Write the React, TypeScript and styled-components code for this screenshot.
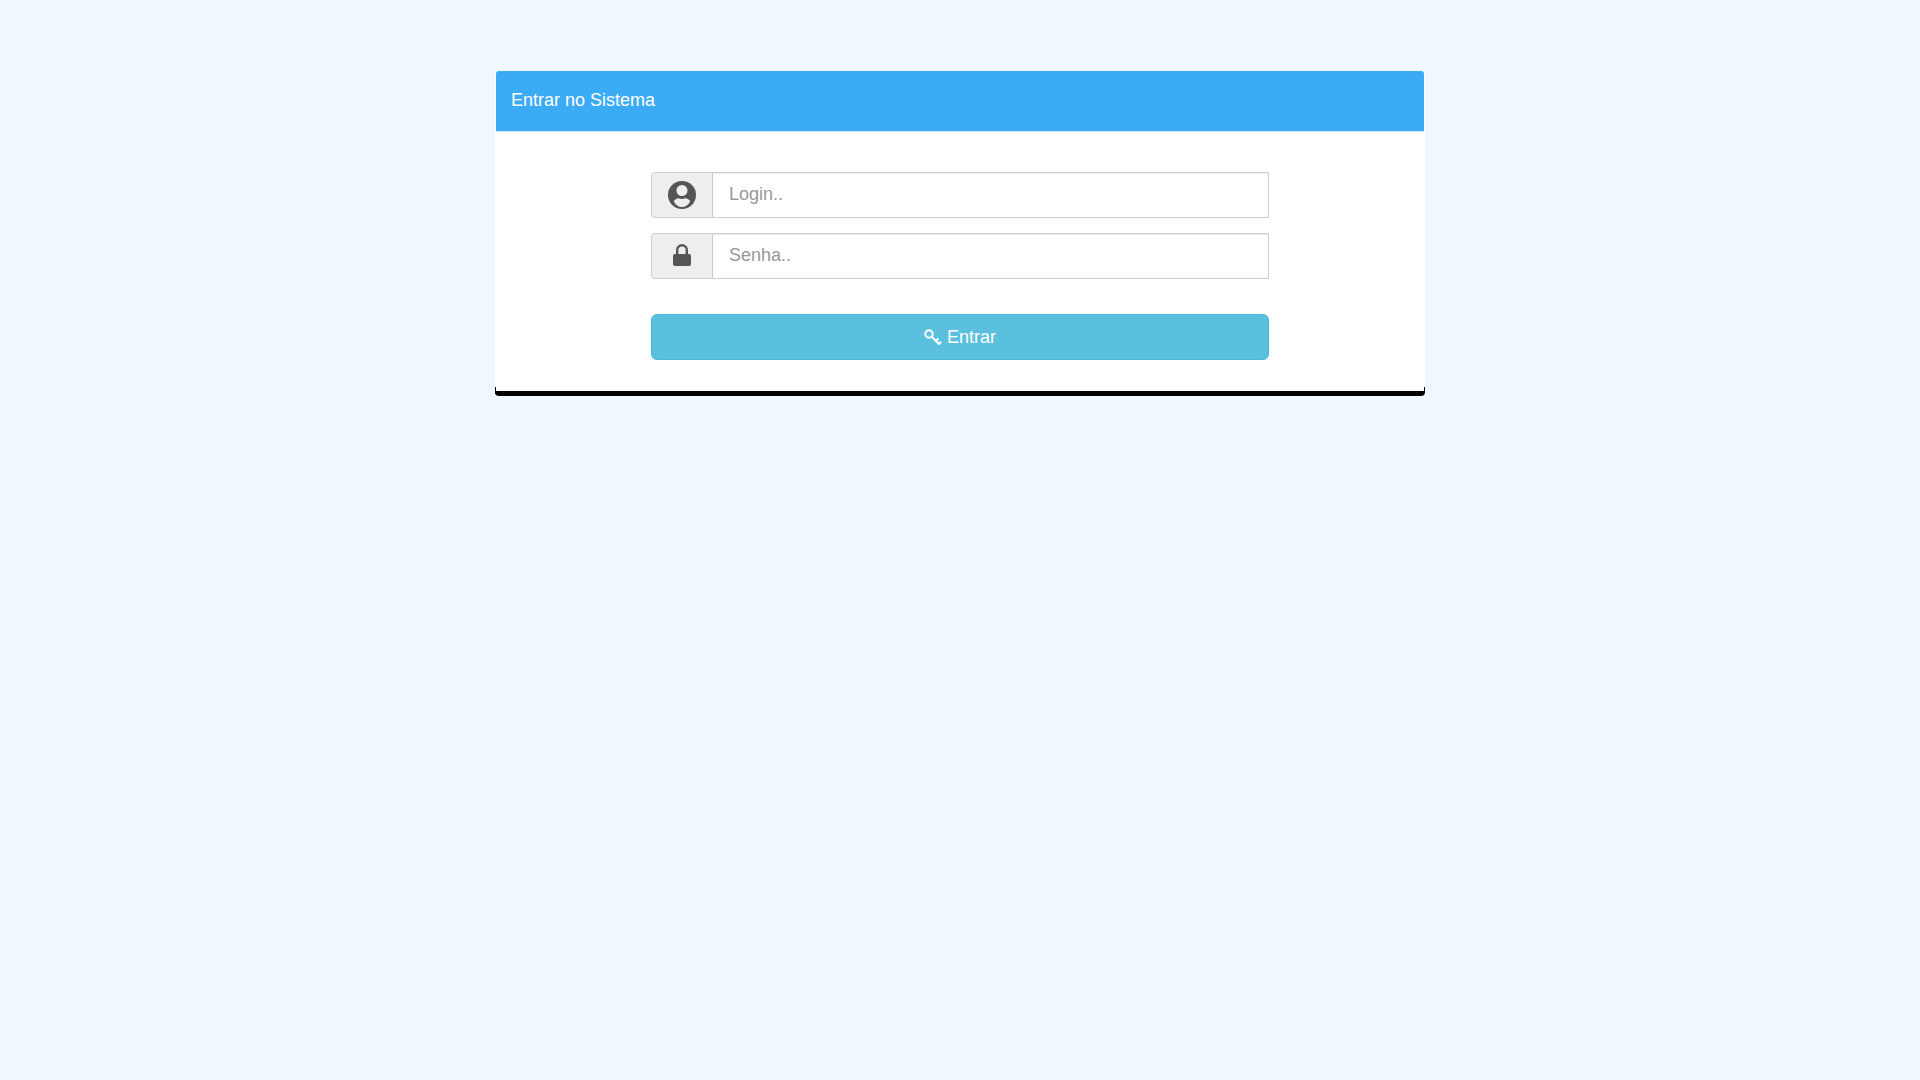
import styled, { createGlobalStyle } from 'styled-components';

const GlobalStyle = createGlobalStyle`
    * {
        box-sizing: border-box;
    }
    body {
        margin: 0;
        min-height: 1080px;
        background-color: #eff7ff;
        font-family: "Liberation Sans", Arial, sans-serif;
    }
`;

const Page = styled.div`
    padding-top: 71px;
`;

const Panel = styled.div`
    position: relative;
    width: 930px;
    height: 320px;
    margin: 0 auto;
    background-color: #fff;
    border-radius: 4px 4px 0 0;

    /* black foot with small hooks at both corners */
    &::after {
        content: "";
        box-sizing: border-box;
        position: absolute;
        left: 0;
        right: 0;
        bottom: -5px;
        height: 9px;
        border-left: 1px solid #000;
        border-right: 1px solid #000;
        border-bottom: 5px solid #000;
        border-radius: 0 0 4px 4px;
    }
`;

const PanelHeader = styled.div`
    height: 61px;
    margin: 0 1px;
    padding: 0 15px;
    background-color: #3babf5;
    border-bottom: 1px solid #cfe9fb;
    border-radius: 3px 3px 0 0;
    color: #fff;
    font-size: 18px;
    line-height: 58px;
`;

const PanelBody = styled.form`
    width: 618px;
    margin: 0 auto;
    padding: 40px 0 31px;
`;

const InputGroup = styled.div`
    display: flex;
    height: 46px;
    margin-bottom: 15px;
`;

const Addon = styled.span`
    display: flex;
    align-items: center;
    justify-content: center;
    width: 62px;
    background-color: #eee;
    border: 1px solid #ccc;
    border-radius: 4px 0 0 4px;
    color: #555;
`;

const Input = styled.input`
    flex: 1;
    min-width: 0;
    margin-left: -1px;
    padding: 0 16px 2px;
    background-color: #fff;
    border: 1px solid #ccc;
    border-radius: 0;
    box-shadow: inset 0 1px 1px rgba(0, 0, 0, .075);
    color: #555;
    font-family: "Liberation Sans", Arial, sans-serif;
    font-size: 18px;
    outline: none;

    &::placeholder {
        color: #999;
        opacity: 1;
    }
`;

const SubmitButton = styled.button`
    display: flex;
    align-items: center;
    justify-content: center;
    gap: 5px;
    width: 100%;
    height: 46px;
    margin-top: 35px;
    background-color: #5bc0de;
    border: 1px solid #46b8da;
    border-radius: 6px;
    color: #fff;
    font-family: "Liberation Sans", Arial, sans-serif;
    font-size: 18px;
    cursor: pointer;
`;

const LockSvg = styled.svg`
    margin-bottom: 2px;
`;

const UserIcon = () => (
    <svg width="28" height="28" viewBox="0 0 28 28">
        <circle cx="14" cy="14" r="14" fill="currentColor" />
        <circle cx="14" cy="9.500" r="5.500" fill="#eee" />
        <path d="M5.800 20C7.500 18 9 17.300 10.500 17.200C11.500 17.800 12.700 18 14 18C15.300 18 16.500 17.800 17.500 17.200C19 17.300 20.500 18 22.200 20C20.500 24 17.500 26 14 26C10.500 26 7.500 24 5.800 20Z" fill="#eee" />
    </svg>
);

const LockIcon = () => (
    <LockSvg width="18" height="22" viewBox="0 0 18 22">
        <path d="M4.200 11V6a4.800 4.800 0 0 1 9.600 0V11" fill="none" stroke="currentColor" strokeWidth="2.400" />
        <rect x="0" y="10" width="18" height="12" rx="2" fill="currentColor" />
    </LockSvg>
);

const KeyIcon = () => (
    <svg width="18" height="17" viewBox="0 0 18 17">
        <circle cx="5" cy="5" r="3.700" fill="none" stroke="currentColor" strokeWidth="2" />
        <path d="M7.800 7.800L15.500 15.500M12 12l2.500-2.500M15 15l2.200-2.200" fill="none" stroke="currentColor" strokeWidth="2" />
    </svg>
);

const App = () => {
    return (
        <Page>
            <GlobalStyle />
            <Panel>
                <PanelHeader>Entrar no Sistema</PanelHeader>
                <PanelBody onSubmit={(e) => e.preventDefault()}>
                    <InputGroup>
                        <Addon><UserIcon /></Addon>
                        <Input type="text" placeholder="Login.." />
                    </InputGroup>
                    <InputGroup>
                        <Addon><LockIcon /></Addon>
                        <Input type="password" placeholder="Senha.." />
                    </InputGroup>
                    <SubmitButton type="submit"><KeyIcon /> Entrar</SubmitButton>
                </PanelBody>
            </Panel>
        </Page>
    );
};

export default App;
